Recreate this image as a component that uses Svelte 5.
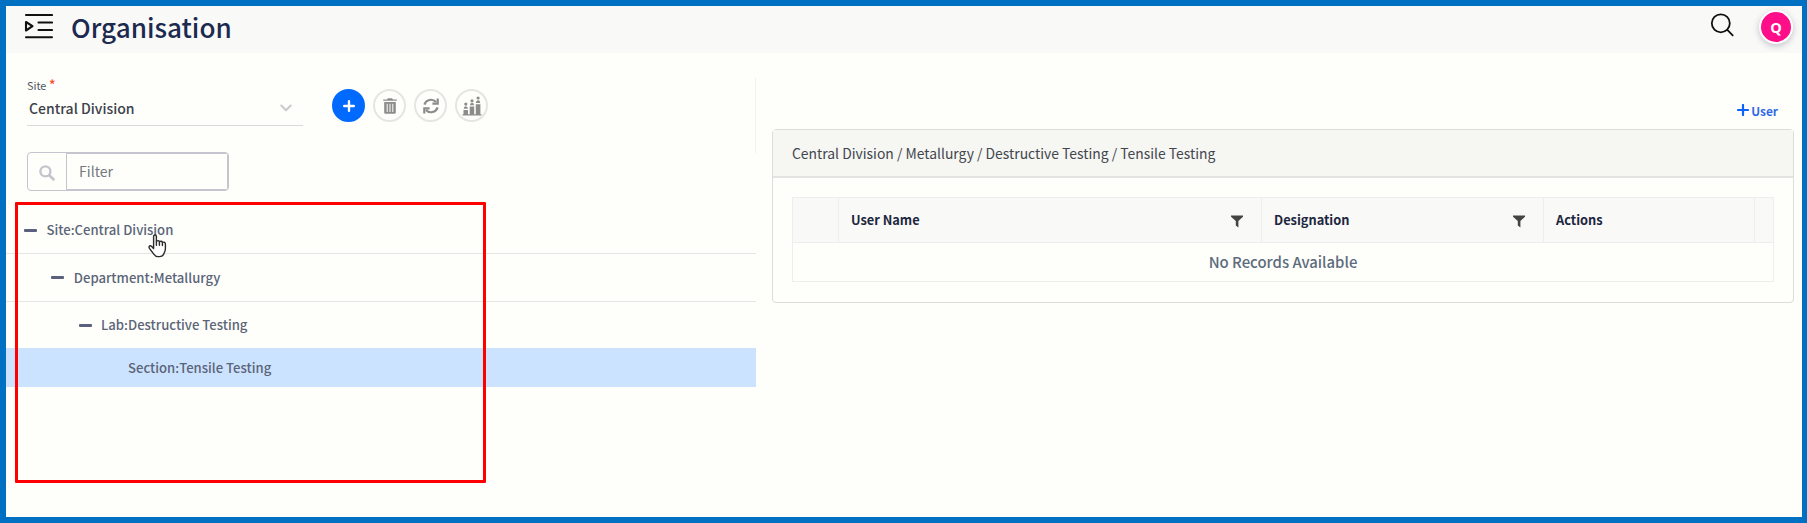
<script>
  const tree = [
    { label: 'Site:Central Division', depth: 0 },
    { label: 'Department:Metallurgy', depth: 1 },
    { label: 'Lab:Destructive Testing', depth: 2 },
    { label: 'Section:Tensile Testing', depth: 3, leaf: true },
  ];
</script>

{#snippet funnel()}
  <svg class="funnel" width="12" height="13" viewBox="0 0 12 13"><path d="M0 0.5H12V1.8L7.4 6V12.6L4.8 10.6V6L0 1.8Z" fill="#444" /></svg>
{/snippet}

<div class="screen">
  <header>
    <svg class="menu" width="30" height="26" viewBox="0 0 30 26" fill="none" stroke="#111" stroke-width="2.1" stroke-linecap="round" stroke-linejoin="round">
      <path d="M3 2H29M15.5 9.5H29M15.5 17H29M3 24.2H29" /><path d="M3 9L9.5 13.2L3 17.5Z" />
    </svg>
    <h1>Organisation</h1>
    <svg class="search" width="25" height="25" viewBox="0 0 25 25" fill="none" stroke="#111" stroke-width="1.8" stroke-linecap="round">
      <circle cx="10.8" cy="10.3" r="9" /><path d="M17.3 16.9L22.7 22.4" />
    </svg>
    <div class="avatar">Q</div>
  </header>

  <main>
    <section class="left">
      <div class="toolbar">
        <div class="field">
          <label for="site">Site<span class="star">*</span></label>
          <div class="select" id="site">
            <span>Central Division</span>
            <svg width="12" height="8" viewBox="0 0 12 8" fill="none" stroke="#cacacd" stroke-width="2" stroke-linecap="round" stroke-linejoin="round"><path d="M1.3 1.5L6 6.2L10.7 1.5" /></svg>
          </div>
        </div>
        <div class="buttons">
          <button class="primary" aria-label="Add">
            <svg width="12" height="12" viewBox="0 0 12 12" stroke="#fff" stroke-width="2.4" stroke-linecap="round"><path d="M6 1.2V10.8M1.2 6H10.8" /></svg>
          </button>
          <button aria-label="Delete">
            <svg width="14" height="16" viewBox="0 0 14 16" fill="#8c8c8a"><path d="M0.2 1.4H4L5 0.3H9L10 1.4H13.8V2.8H0.2Z" /><path fill-rule="evenodd" d="M1.2 4H12.8V14.4Q12.8 15.8 11.4 15.8H2.6Q1.2 15.8 1.2 14.4ZM3.7 5.7V14H4.7V5.7ZM6.5 5.7V14H7.5V5.7ZM9.3 5.7V14H10.3V5.7Z" /></svg>
          </button>
          <button aria-label="Refresh">
            <svg width="16" height="16" viewBox="0 0 16 16" fill="none" stroke="#8c8c8a" stroke-width="2.2"><path d="M1.4 6.6A6.8 6.8 0 0 1 13 4.1M14.6 9.4A6.8 6.8 0 0 1 3 11.9" /><path d="M14.7 0.4V5.7H9.4M1.3 15.6V10.3H6.6" /></svg>
          </button>
          <button aria-label="Hierarchy">
            <svg width="20" height="20" viewBox="0 0 20 20" fill="#8c8c8a"><path d="M0.5 18.2H19.5V19.5H0.5ZM1.5 14H6V18.2H1.5ZM7.7 10.5H12.2V18.2H7.7ZM13.8 8.3H18.4V18.2H13.8ZM1.7 12.8Q1.7 10.3 3.8 10.3Q5.9 10.3 5.9 12.8ZM7.9 9.3Q7.9 6.8 10 6.8Q12.1 6.8 12.1 9.3ZM14 7Q14 4.2 16.1 4.2Q18.2 4.2 18.2 7Z" /><circle cx="3.8" cy="8.1" r="1.6" /><circle cx="10" cy="4.8" r="1.6" /><circle cx="16.1" cy="2" r="1.6" /></svg>
          </button>
        </div>
      </div>

      <div class="filter">
        <span class="addon">
          <svg width="16" height="16" viewBox="0 0 16 16" fill="none" stroke="#c5c4cd" stroke-width="2.4" stroke-linecap="round"><circle cx="6.4" cy="6.4" r="5" /><path d="M10.5 10.5L14.4 14.2" stroke-width="2.8" /></svg>
        </span>
        <span class="input">Filter</span>
      </div>

      <div class="tree">
        {#each tree as node}
          <div class="node d{node.depth}" class:selected={node.leaf}>
            {#if !node.leaf}<i class="minus"></i>{/if}
            <span>{node.label}</span>
          </div>
        {/each}
      </div>
    </section>

    <section class="right">
      <div class="add-user">
        <svg width="12" height="12" viewBox="0 0 12 12" stroke="#0d63fb" stroke-width="2.2" stroke-linecap="round"><path d="M6 1V11M1 6H11" /></svg>
        <span>User</span>
      </div>
      <div class="card">
        <div class="crumbs">Central Division / Metallurgy / Destructive Testing / Tensile Testing</div>
        <div class="grid">
          <div class="head">
            <div class="cell"></div>
            <div class="cell">User Name {@render funnel()}</div>
            <div class="cell">Designation {@render funnel()}</div>
            <div class="cell">Actions</div>
            <div class="cell"></div>
          </div>
          <div class="empty">No Records Available</div>
        </div>
      </div>
    </section>
  </main>

  <div class="highlight"></div>
  <svg class="cursor" width="20" height="24" viewBox="0 0 20 24" fill="#fff" stroke="#2b2b2b" stroke-width="1.4" stroke-linejoin="round" stroke-linecap="round">
    <path d="M5.6 14.6V2.6Q5.6 1 7 1Q8.4 1 8.4 2.6V7.2Q10.8 5.9 11.4 7.6Q13.8 6.6 14.4 8.4Q17.3 7.4 17.4 10.3V14.5Q17.4 17.2 16 19.4Q14.8 22.6 11.5 22.6H9.8Q7.4 22.6 5.8 20.2L1.4 14.3Q0.4 12.2 2.2 11.8Q3.4 11.6 5.6 14.6Z" /><path d="M8.4 7.2V11.2M11.4 7.6V11.2M14.4 8.4V11.6" />
  </svg>
</div>

<style>
  :global(body) { margin: 0; overflow: hidden; }
  .screen {
    position: relative; box-sizing: border-box; width: 1807px; height: 523px;
    border: 6px solid #0070c3; border-right-width: 5px; background: #fefffa;
    font-family: "Noto Sans CJK SC", "Noto Sans", sans-serif; color: #3e4450;
    display: flex; flex-direction: column;
  }
  header { height: 47px; flex: none; display: flex; align-items: flex-start; background: #f9f9f7; }
  .menu { margin: 7px 0 0 17px; }
  h1 { margin: 2px 0 0 18px; font-size: 26.1px; line-height: 38px; font-weight: 500; color: #1b2a4e; }
  .search { margin: 7px 0 0 auto; }
  .avatar {
    width: 30px; height: 30px; margin: 4px 9px 0 24px; border: 2px solid #fff; border-radius: 50%;
    background: #ff0e8a; color: #fff; box-shadow: 0 2px 6px rgba(60, 70, 110, .3);
    font: 700 14.5px/31px "Open Sans", sans-serif; text-align: center;
  }
  main { flex: 1; display: flex; }
  .left { width: 750px; display: flex; flex-direction: column; }
  .toolbar { margin-top: 25px; height: 75px; border-right: 1px solid #f0f1ee; display: flex; }
  .field { width: 276px; margin-left: 21px; }
  label { display: flex; height: 15px; font-size: 10.8px; line-height: 14px; color: #4f545e; }
  .star { margin-left: 3px; font-size: 12px; line-height: 11px; color: #ff4b30; font-weight: 700; }
  .select {
    box-sizing: border-box; height: 33px; padding: 0 11px 3px 2px; border-bottom: 1px solid #d9dadb;
    display: flex; align-items: center; justify-content: space-between; font-size: 14px; line-height: 20px; font-weight: 500; color: #3d414b;
  }
  .buttons { display: flex; gap: 8px; margin: 11px 0 0 29px; height: 33px; }
  button {
    box-sizing: border-box; width: 33px; height: 33px; padding: 0; border: 2px solid #e5e5e2; border-radius: 50%;
    background: transparent; display: flex; align-items: center; justify-content: center;
  }
  .primary { border-color: #006afe; background: #006afe; }
  .filter {
    box-sizing: border-box; width: 202px; height: 39px; margin: -1px 0 0 21px; border: 1px solid #c5c4cf; border-radius: 4px;
    display: flex; overflow: hidden; font-size: 14.1px; line-height: 35px; color: #74777f;
  }
  .addon { box-sizing: border-box; width: 38px; padding-top: 2px; display: flex; align-items: center; justify-content: center; }
  .input { flex: 1; padding-left: 12px; border: 1px solid #c5c4cf; }
  .tree { margin-top: 15px; font-size: 13.12px; font-weight: 500; color: #5b6478; }
  .node { box-sizing: border-box; height: 48px; display: flex; align-items: center; border-bottom: 1px solid #e4e5e4; }
  .node span { line-height: 20px; }
  .minus { width: 13px; height: 3px; margin-right: 9.5px; border-radius: 1px; background: #5c607f; }
  .d0 { padding: 1px 0 0 18px; }
  .d1 { padding-left: 45.3px; }
  .d2 { height: 46px; padding-left: 72.5px; border-bottom: 0; }
  .d3 { padding-left: 122px; }
  .selected { height: 39px; border: 0; background: #cce3ff; }
  .right { width: 1022px; margin-left: 16px; }
  .add-user {
    height: 76px; box-sizing: border-box; padding: 49px 16px 0 0; display: flex; justify-content: flex-end;
    font-size: 11.9px; line-height: 17px; font-weight: 700; color: #2f69e8;
  }
  .add-user svg { margin: 2px 2.5px 0 0; }
  .card { box-sizing: border-box; height: 174px; border: 1px solid #dcddda; border-radius: 4px; }
  .crumbs {
    box-sizing: border-box; height: 48px; padding-left: 19px; border-bottom: 2px solid #e3e4e1; background: #f6f6f3;
    font-size: 13.9px; line-height: 47px; color: #42464e;
  }
  .grid { box-sizing: border-box; width: 982px; height: 85px; margin: 19px 0 0 19px; border: 1px solid #eeefed; }
  .head {
    box-sizing: border-box; height: 45px; display: grid; grid-template-columns: 46px 423px 282px 211px 1fr;
    background: #f9f9f7; border-bottom: 1px solid #eeefed; font-size: 12.8px; line-height: 44px; font-weight: 700; color: #1c2740;
  }
  .cell { display: flex; align-items: center; justify-content: space-between; border-right: 1px solid #eeefed; padding: 0 18px 0 12px; }
  .cell:last-child { border-right: 0; padding: 0; }
  .cell:first-child { padding: 0; }
  .funnel { margin-top: 2px; }
  .empty { font-size: 14.9px; line-height: 37px; font-weight: 500; text-align: center; color: #5d6b7e; }
  .highlight { position: absolute; left: 9px; top: 196px; width: 465px; height: 275px; border: 3px solid #fe0000; border-radius: 1px; }
  .cursor { position: absolute; left: 142px; top: 228px; }
</style>
